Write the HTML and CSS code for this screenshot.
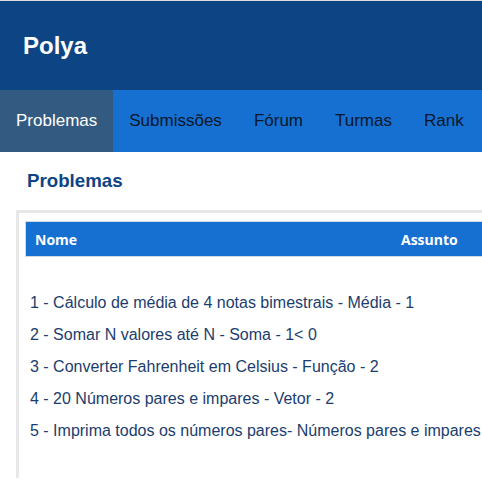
FILE: index.html
```html
<!DOCTYPE html>
<html lang="pt-BR">
<head>
<meta charset="utf-8">
<title>Polya</title>
<link rel="stylesheet" href="styles.css">
</head>
<body>
<header class="topbar">
  <h1 class="brand">Polya</h1>
</header>
<nav class="menu">
  <a class="menu-item active" href="#">Problemas</a>
  <a class="menu-item" href="#">Submissões</a>
  <a class="menu-item" href="#">Fórum</a>
  <a class="menu-item" href="#">Turmas</a>
  <a class="menu-item" href="#">Rank</a>
</nav>
<main class="content">
  <h3 class="page-title">Problemas</h3>
  <section class="card">
    <div class="table-head">
      <span>Nome</span>
      <span>Assunto</span>
    </div>
    <ul class="problem-list">
      <li>1 - Cálculo de média de 4 notas bimestrais - Média - 1</li>
      <li>2 - Somar N valores até N - Soma - 1&lt; 0</li>
      <li>3 - Converter Fahrenheit em Celsius - Função - 2</li>
      <li>4 - 20 Números pares e impares - Vetor - 2</li>
      <li>5 - Imprima todos os números pares- Números pares e impares</li>
    </ul>
  </section>
</main>
</body>
</html>
```

FILE: styles.css
```css
html {
  overflow: hidden;
}

body {
  margin: 0;
  border-top: 1px solid #dcdcdc;
  font-family: "Liberation Sans", Arial, sans-serif;
  background: #ffffff;
}

.topbar {
  height: 89px;
  background: #0d4584;
  display: flex;
  align-items: center;
  padding-left: 23px;
}

.brand {
  margin: 0;
  color: #ffffff;
  font-size: 24px;
  font-weight: bold;
  line-height: 1;
}

.menu {
  display: flex;
  height: 62px;
  background: #1570d2;
  white-space: nowrap;
}

.menu-item {
  display: flex;
  align-items: center;
  padding: 0 16px;
  font-size: 17px;
  color: #0b1729;
  text-decoration: none;
}

.menu-item.active {
  background: #335a80;
  color: #ffffff;
}

.content {
  padding-left: 16px;
}

.page-title {
  margin: 18px 0 18px 11px;
  font-size: 18.72px;
  font-weight: bold;
  color: #0d4584;
}

.card {
  width: 700px;
  height: 257px;
  border-top: 3px solid #e8e8e8;
  border-left: 3px solid #e8e8e8;
  padding: 8px 0 0 6px;
  box-sizing: content-box;
}

.table-head {
  display: grid;
  grid-template-columns: 366px auto;
  align-items: center;
  height: 34px;
  padding: 0 9px;
  border: 1px solid #cfd9e6;
  background: #1570d2;
  color: #ffffff;
  font-family: "Open Sans", "Noto Sans", sans-serif;
  font-weight: 700;
  font-size: 14px;
}

.problem-list {
  list-style: none;
  margin: 0;
  padding: 37px 0 0 5px;
  display: flex;
  flex-direction: column;
  gap: 14px;
  white-space: nowrap;
}

.problem-list li {
  font-size: 16px;
  line-height: 18px;
  color: #1b3d6d;
}
```
